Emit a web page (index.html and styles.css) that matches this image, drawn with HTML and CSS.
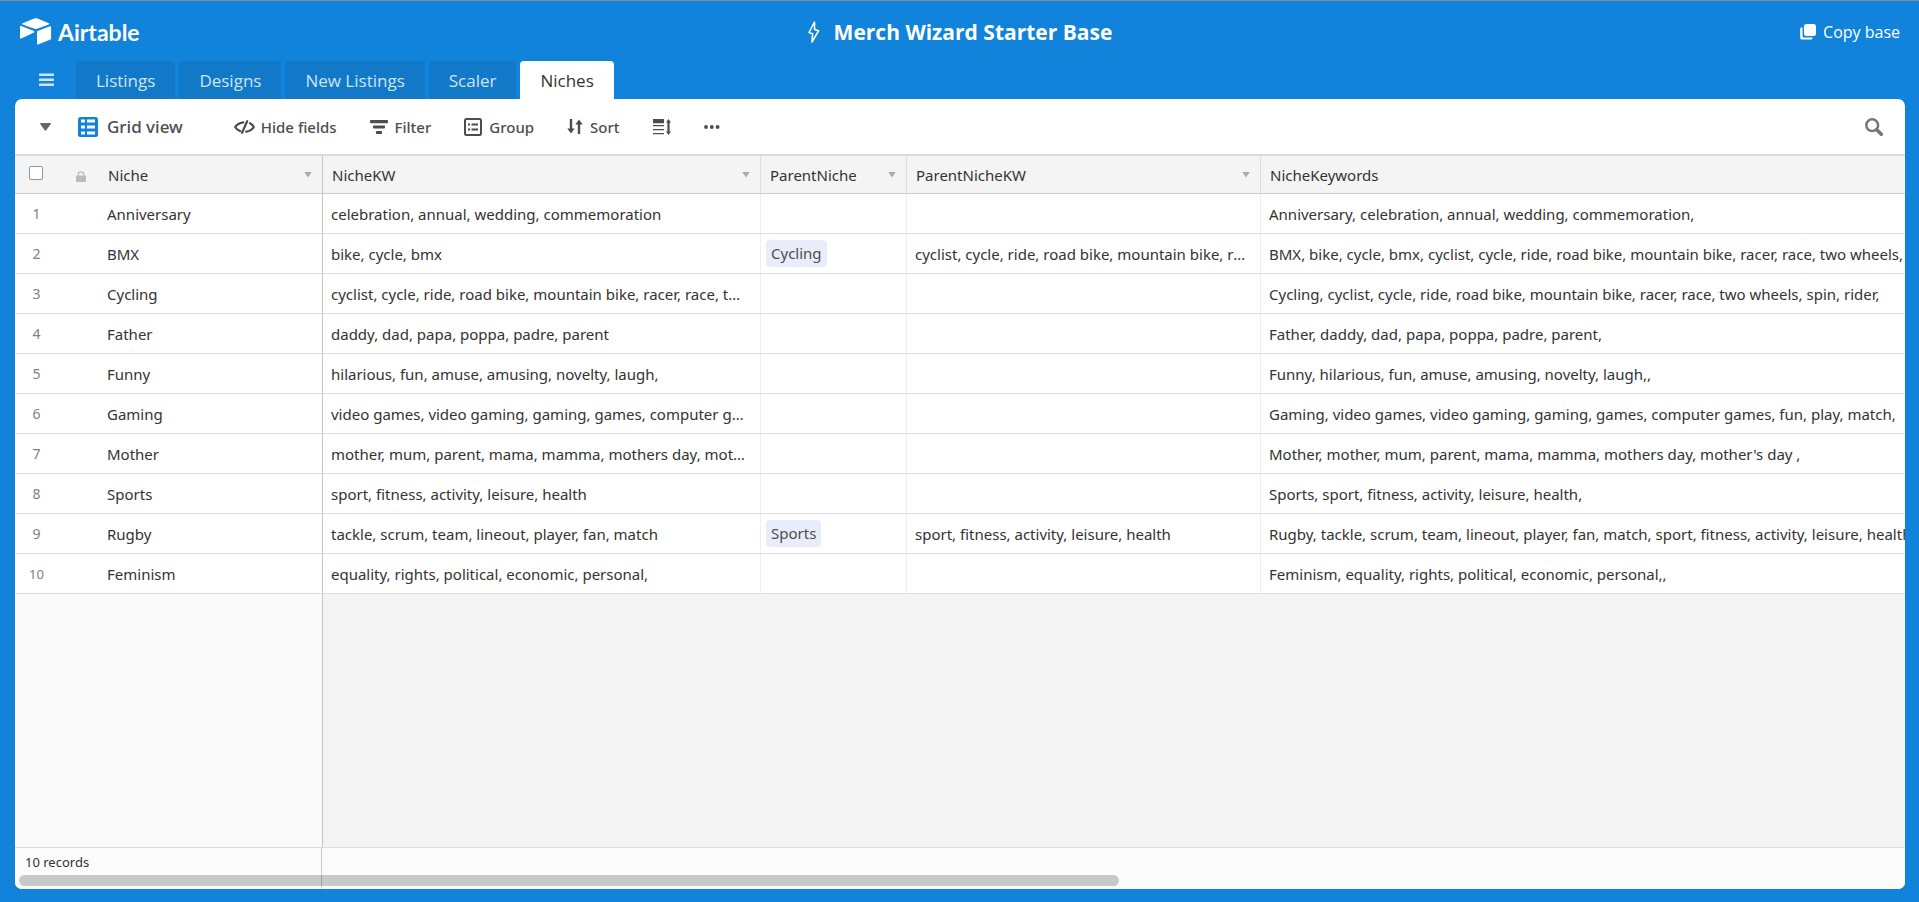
FILE: index.html
```html
<!DOCTYPE html>
<html lang="en">
<head>
<meta charset="utf-8">
<title>Merch Wizard Starter Base</title>
<link rel="stylesheet" href="styles.css">
</head>
<body>
<div class="app">
  <header class="topbar">
    <a class="brand" href="#">
      <svg width="32" height="28" viewBox="0 0 32 28" fill="#fff" aria-hidden="true"><path d="M14.2.6 2.6 5.2c-.6.3-.6 1 0 1.300l12 4.300c.8.3 1.800.3 2.600 0L28.800 6.400c.6-.3.600-1 0-1.200L17.500.6a4.600 4.600 0 0 0-3.300 0z"/><path d="M17 13.800v12c0 .6.500.9 1 .7l12.500-4.900c.4-.1.600-.4.600-.8V8.900c0-.6-.5-.9-1-.7L17.600 13a.9.900 0 0 0-.6.800z"/><path d="M14 14.400 4.500 19l-3.300 1.600c-.6.2-1.200-.1-1.200-.8V8.700c0-.7.600-1 1.300-.8l12.600 5c.5.300.6 1.200.1 1.500z"/></svg>
      <span>Airtable</span>
    </a>
    <h1 class="title">
      <svg width="12" height="22" viewBox="0 0 12 22" fill="none" stroke="#fff" stroke-width="1.600" stroke-linejoin="round" aria-hidden="true"><path d="M6.500 1 1 11.500l3.600 1.200L4 21l6.500-11.200-3.900-1.200z"/></svg>
      <span>Merch Wizard Starter Base</span>
    </h1>
    <button class="copy" type="button">
      <svg width="16" height="16" viewBox="0 0 16 16" fill="#fff" aria-hidden="true"><rect x="4" y="0" width="12" height="12" rx="2.500"/><path d="M2.500 3.500v8.300c0 1 .7 1.700 1.700 1.700h8.300V14c0 .9-.6 1.500-1.500 1.500H2C.9 15.500.2 14.800.2 13.700V5c0-.9.700-1.500 1.600-1.500z"/></svg>
      <span>Copy base</span>
    </button>
  </header>

  <nav class="tabs" aria-label="Tables">
    <button class="menu" type="button" aria-label="All tables">
      <svg width="15" height="14" viewBox="0 0 15 14" fill="#cfe5f8" aria-hidden="true"><rect width="15" height="2.500" y=".5" rx=".5"/><rect width="15" height="2.500" y="5.500" rx=".5"/><rect width="15" height="2.500" y="10.500" rx=".5"/></svg>
    </button>
    <a class="tab" href="#">Listings</a>
    <a class="tab" href="#">Designs</a>
    <a class="tab" href="#">New Listings</a>
    <a class="tab" href="#">Scaler</a>
    <a class="tab tab-active" href="#" aria-current="page">Niches</a>
  </nav>

  <main class="panel">
    <div class="toolbar">
      <button class="tool tool-caret" type="button" aria-label="Views"><svg width="11" height="8" viewBox="0 0 11 8" fill="#666" aria-hidden="true"><path d="M1 0h9c.8 0 1 .6.600 1.200L6.300 7.200c-.4.600-1.200.6-1.600 0L.4 1.200C0 .6.200 0 1 0z"/></svg></button>
      <button class="tool tool-view" type="button"><svg width="20" height="20" viewBox="0 0 20 20" aria-hidden="true"><rect width="20" height="20" rx="2.500" fill="#1283da"/><path fill="#fff" d="M3 2.500h4v3H3zM9 2.500h8v3H9zM3 8.500h4v3H3zM9 8.500h8v3H9zM3 14.500h4v3H3zM9 14.500h8v3H9z"/></svg><span>Grid view</span></button>
      <button class="tool tool-hide" type="button"><svg width="21" height="14" viewBox="0 0 21 14" fill="none" stroke="#4d4d4d" stroke-width="2.200" stroke-linecap="round" aria-hidden="true"><path d="M13.200 1.200 8 12.800M9.300 2.300C5.500 2.800 2.700 4.500 1.200 7c.9 1.700 2.400 3 4.800 4M16 3.200c1.700.9 3 2.200 3.800 3.800-1.500 2.600-4 4.200-7.600 4.700"/></svg><span>Hide fields</span></button>
      <button class="tool" type="button"><svg width="18" height="14" viewBox="0 0 18 14" fill="#4d4d4d" aria-hidden="true"><rect width="18" height="3.200" rx=".8"/><rect x="3" y="5.500" width="12" height="3" rx=".8"/><rect x="6" y="11" width="6" height="3" rx=".8"/></svg><span>Filter</span></button>
      <button class="tool" type="button"><svg width="18" height="18" viewBox="0 0 18 18" fill="none" stroke="#4d4d4d" stroke-width="2" aria-hidden="true"><rect x="1" y="1" width="16" height="16" rx="1.500"/><path d="M4 6.500h2M4 11.500h2M7.500 6.500H14M7.500 11.500H14"/></svg><span>Group</span></button>
      <button class="tool tool-sort" type="button"><svg width="16" height="15" viewBox="0 0 16 15" fill="#4d4d4d" aria-hidden="true"><path d="M2.800 0h2.400v9.500h2.500L4 14.500.3 9.500h2.500zM10.800 15h2.400V5.500h2.500L12 .5 8.300 5.500h2.500z"/></svg><span>Sort</span></button>
      <button class="tool" type="button" aria-label="Row height"><svg width="18" height="16" viewBox="0 0 18 16" aria-hidden="true"><path fill="#4d4d4d" d="M0 0h11v4.200H0zM15.500 0 18 3.500h-1.400v9H18L15.500 16 13 12.500h1.400v-9H13z"/><path stroke="#4d4d4d" stroke-width="1.300" d="M0 6.700h11M0 10.700h11M0 14.700h11"/></svg></button>
      <button class="tool" type="button" aria-label="More"><svg width="16" height="4" viewBox="0 0 16 4" fill="#4d4d4d" aria-hidden="true"><circle cx="2" cy="2" r="1.900"/><circle cx="7.800" cy="2" r="1.900"/><circle cx="13.600" cy="2" r="1.900"/></svg></button>
      <button class="tool tool-search" type="button" aria-label="Search"><svg width="18" height="18" viewBox="0 0 18 18" fill="none" stroke="#777" aria-hidden="true"><circle cx="7.200" cy="7.200" r="5.900" stroke-width="2.500"/><path d="m11.500 11.500 4.800 4.800" stroke-width="3.500" stroke-linecap="round"/></svg></button>
    </div>

    <div class="grid">
      <table class="records">
        <colgroup><col class="c-num"><col class="c-lock"><col class="c-niche"><col class="c-kw"><col class="c-parent"><col class="c-parentkw"><col></colgroup>
        <thead>
          <tr>
            <th><input class="check" type="checkbox" aria-label="Select all records"></th>
            <th class="lock"><svg width="10" height="11" viewBox="0 0 10 11" aria-label="Locked"><rect y="4.500" width="10" height="6.500" rx="1" fill="#bbb"/><path d="M2.200 5V3.300a2.800 2.500 0 0 1 5.600 0V5" fill="none" stroke="#bbb" stroke-width="1.300"/></svg></th>
            <th class="frozen"><div class="head"><span>Niche</span><i class="caret"></i></div></th>
            <th><div class="head"><span>NicheKW</span><i class="caret"></i></div></th>
            <th><div class="head"><span>ParentNiche</span><i class="caret"></i></div></th>
            <th><div class="head"><span>ParentNicheKW</span><i class="caret"></i></div></th>
            <th><div class="head"><span>NicheKeywords</span></div></th>
          </tr>
        </thead>
        <tbody>
          <tr><td class="num">1</td><td></td><td class="frozen">Anniversary</td><td>celebration, annual, wedding, commemoration</td><td></td><td></td><td>Anniversary, celebration, annual, wedding, commemoration,</td></tr>
          <tr><td class="num">2</td><td></td><td class="frozen">BMX</td><td>bike, cycle, bmx</td><td class="link"><span class="chip">Cycling</span></td><td>cyclist, cycle, ride, road bike, mountain bike, racer, race, two wheels, spin, rider</td><td>BMX, bike, cycle, bmx, cyclist, cycle, ride, road bike, mountain bike, racer, race, two wheels, spin, rider</td></tr>
          <tr><td class="num">3</td><td></td><td class="frozen">Cycling</td><td>cyclist, cycle, ride, road bike, mountain bike, racer, race, two wheels, spin, rider</td><td></td><td></td><td>Cycling, cyclist, cycle, ride, road bike, mountain bike, racer, race, two wheels, spin, rider,</td></tr>
          <tr><td class="num">4</td><td></td><td class="frozen">Father</td><td>daddy, dad, papa, poppa, padre, parent</td><td></td><td></td><td>Father, daddy, dad, papa, poppa, padre, parent,</td></tr>
          <tr><td class="num">5</td><td></td><td class="frozen">Funny</td><td>hilarious, fun, amuse, amusing, novelty, laugh,</td><td></td><td></td><td>Funny, hilarious, fun, amuse, amusing, novelty, laugh,,</td></tr>
          <tr><td class="num">6</td><td></td><td class="frozen">Gaming</td><td>video games, video gaming, gaming, games, computer games, fun, play, match</td><td></td><td></td><td>Gaming, video games, video gaming, gaming, games, computer games, fun, play, match,</td></tr>
          <tr><td class="num">7</td><td></td><td class="frozen">Mother</td><td>mother, mum, parent, mama, mamma, mothers day, mother's day</td><td></td><td></td><td>Mother, mother, mum, parent, mama, mamma, mothers day, mother's day ,</td></tr>
          <tr><td class="num">8</td><td></td><td class="frozen">Sports</td><td>sport, fitness, activity, leisure, health</td><td></td><td></td><td>Sports, sport, fitness, activity, leisure, health,</td></tr>
          <tr><td class="num">9</td><td></td><td class="frozen">Rugby</td><td>tackle, scrum, team, lineout, player, fan, match</td><td class="link"><span class="chip">Sports</span></td><td>sport, fitness, activity, leisure, health</td><td>Rugby, tackle, scrum, team, lineout, player, fan, match, sport, fitness, activity, leisure, health</td></tr>
          <tr><td class="num num-long">10</td><td></td><td class="frozen">Feminism</td><td>equality, rights, political, economic, personal,</td><td></td><td></td><td>Feminism, equality, rights, political, economic, personal,,</td></tr>
        </tbody>
      </table>
      <div class="empty"><div class="empty-left"></div></div>
      <footer class="footer">
        <div class="count">10 records</div>
        <div class="scroll"></div>
      </footer>
    </div>
  </main>
</div>
</body>
</html>
```

FILE: styles.css
```css
* { box-sizing: border-box; }

body {
  margin: 0;
  font-family: "Noto Sans", "Open Sans", sans-serif;
  font-size: 15px;
  color: #333;
}

button {
  margin: 0;
  padding: 0;
  border: 0;
  background: none;
  font: inherit;
  color: inherit;
}

a { color: inherit; text-decoration: none; }

svg { display: block; flex: none; }

.app {
  display: flex;
  flex-direction: column;
  height: 100vh;
  padding: 0 14px 13px 15px;
  border-top: 1px solid #7b8b9a;
  background: #1283da;
}

/* Top bar */
.topbar {
  display: grid;
  grid-template-columns: 1fr auto 1fr;
  align-items: center;
  height: 60px;
  padding: 2px 5px 0;
  font-family: "Open Sans", "Noto Sans", sans-serif;
  color: #fff;
}

.brand {
  display: flex;
  align-items: center;
  gap: 6px;
  font-family: Lato, sans-serif;
  font-size: 23px;
  font-weight: 700;
}

.title {
  display: flex;
  align-items: center;
  gap: 14px;
  margin: 0;
  font-size: 21px;
  font-weight: 700;
}

.copy {
  display: flex;
  align-items: center;
  justify-self: end;
  gap: 7px;
  font-size: 16px;
}

/* Table tabs */
.tabs {
  display: flex;
  gap: 4px;
  height: 38px;
  flex: none;
  font-family: "Open Sans", "Noto Sans", sans-serif;
}

.menu {
  display: flex;
  align-items: center;
  justify-content: center;
  width: 57px;
  padding-left: 5px;
}

.tab {
  display: flex;
  align-items: center;
  padding: 0 20px;
  border-radius: 4px 4px 0 0;
  background: #1279c9;
  font-size: 17px;
  color: #cfe4f6;
}

.tab-active { background: #fff; color: #333; font-weight: 500; }

/* Panel */
.panel {
  display: flex;
  flex: 1;
  flex-direction: column;
  min-height: 0;
  overflow: hidden;
  border-radius: 7px;
  background: #fff;
}

.toolbar {
  display: flex;
  flex: none;
  align-items: center;
  gap: 33px;
  height: 57px;
  padding: 0 22px 0 25px;
  border-bottom: 2px solid #dbdbdb;
  font-weight: 500;
  color: #4d4d4d;
}

.tool { display: flex; align-items: center; gap: 7px; }
.tool-view { gap: 9px; margin-left: -6px; font-size: 17px; }
.tool-hide { gap: 6px; margin-left: 18px; }
.tool-search { margin-left: auto; }

.grid {
  display: flex;
  flex: 1;
  flex-direction: column;
  min-height: 0;
}

/* Records */
.records {
  width: 100%;
  table-layout: fixed;
  border-collapse: separate;
  border-spacing: 0;
}

.c-num { width: 43px; }
.c-lock { width: 41px; }
.c-niche { width: 224px; }
.c-kw { width: 438px; }
.c-parent { width: 146px; }
.c-parentkw { width: 354px; }

th {
  height: 38px;
  padding: 0;
  border-bottom: 1px solid #ccc;
  border-right: 1px solid #ddd;
  background: #f4f4f4;
  font-weight: 400;
  text-align: left;
}

td {
  height: 40px;
  padding: 1px 10px 0 8px;
  overflow: hidden;
  border-right: 1px solid #eee;
  border-bottom: 1px solid #ddd;
  background: #fff;
  white-space: nowrap;
  text-overflow: ellipsis;
}

th:nth-child(-n+2), td:nth-child(-n+2), th:last-child, td:last-child { border-right: 0; }
td:last-child { padding-right: 0; text-overflow: clip; }

th.frozen, td.frozen { border-right: 1px solid #c4c4c4; }

.head {
  display: flex;
  align-items: center;
  justify-content: space-between;
  padding: 0 10px 0 9px;
}

.caret {
  width: 8px;
  height: 6px;
  background: #aaa;
  clip-path: polygon(0 0, 100% 0, 50% 100%);
}

.check {
  display: block;
  appearance: none;
  width: 14px;
  height: 14px;
  margin: 0 0 4px 14px;
  border: 1px solid #8a97a5;
  border-radius: 2px;
  background: #fff;
}

.lock svg { margin: 3px 0 0 18px; }

td.num { padding: 0; font-size: 14px; text-align: center; color: #808080; }
td.num-long { font-size: 13px; }

td.link { padding: 0 5px; }

.chip {
  display: inline-block;
  padding: 0 5px;
  border-radius: 4px;
  background: #e9edf9;
  line-height: 27px;
  color: #4d4d4d;
}

.empty { flex: 1; background: #f4f4f4; }

.empty-left {
  width: 308px;
  height: 100%;
  border-right: 1px solid #c4c4c4;
  background: #fafafa;
}

/* Footer */
.footer {
  position: relative;
  flex: none;
  height: 42px;
  border-top: 1px solid #ddd;
  background: #fbfbfb;
}

.count {
  width: 307px;
  height: 100%;
  padding: 4px 10px;
  border-right: 1px solid #ccc;
  font-size: 13px;
  line-height: 20px;
}

.scroll {
  position: absolute;
  left: 4px;
  right: 786px;
  bottom: 3px;
  height: 11px;
  border-radius: 6px;
  background: rgba(0, 0, 0, 0.2);
}
```
